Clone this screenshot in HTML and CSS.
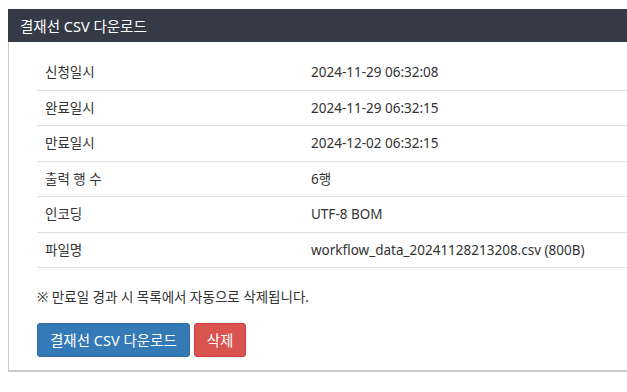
FILE: index.html
```html
<!DOCTYPE html>
<html lang="ko">
<head>
    <meta charset="UTF-8">
    <title>결재선 CSV 다운로드</title>
    <link rel="stylesheet" href="styles.css">
</head>
<body>
    <!-- CSV download panel -->
    <div class="panel">
        <div class="panel-heading">결재선 CSV 다운로드</div>
        <div class="panel-body">
            <table class="info-table">
                <tr><th>신청일시</th><td>2024-11-29 06:32:08</td></tr>
                <tr><th>완료일시</th><td>2024-11-29 06:32:15</td></tr>
                <tr><th>만료일시</th><td>2024-12-02 06:32:15</td></tr>
                <tr><th>출력 행 수</th><td>6행</td></tr>
                <tr><th>인코딩</th><td>UTF-8 BOM</td></tr>
                <tr><th>파일명</th><td>workflow_data_20241128213208.csv (800B)</td></tr>
            </table>
            <p class="note">※ 만료일 경과 시 목록에서 자동으로 삭제됩니다.</p>
            <div class="actions">
                <button class="btn btn-primary">결재선 CSV 다운로드</button>
                <button class="btn btn-danger">삭제</button>
            </div>
        </div>
    </div>
</body>
</html>
```

FILE: styles.css
```css
/* page */
body {
    margin: 0;
    padding: 9px 0 0 8px;
    background-color: #fff;
    color: #333;
    font-family: "Noto Sans", "Noto Sans CJK KR", sans-serif;
    font-size: 13.5px;
    line-height: 18.57px;
}

/* panel */
.panel {
    border-left: 1px solid #ccc;
    border-bottom: 2px solid #ccc;
}

.panel-heading {
    background-color: #343a46;
    color: #fff;
    font-size: 14.5px;
    line-height: 20px;
    padding: 7px 12px 6px;
    margin-left: -1px;
}

.panel-body {
    padding: 13px 0 13px 28px;
}

/* detail table */
.info-table {
    width: 100%;
    table-layout: fixed;
    border-collapse: collapse;
    margin-bottom: 20px;
}

.info-table th,
.info-table td {
    text-align: left;
    font-weight: normal;
    padding: 8px;
    border-bottom: 1px solid #ddd;
}

.info-table th {
    width: 250px;
}

.note {
    margin: 0 0 16px;
}

/* buttons */
.actions {
    display: flex;
    gap: 4px;
}

.btn {
    font-family: inherit;
    font-size: 14.5px;
    line-height: 20px;
    padding: 6px 12px;
    border: 1px solid transparent;
    border-radius: 3px;
    color: #fff;
    cursor: pointer;
}

.btn-primary {
    background-color: #337ab7;
    border-color: #2e6da4;
}

.btn-danger {
    background-color: #d9534f;
    border-color: #d43f3a;
}
```
